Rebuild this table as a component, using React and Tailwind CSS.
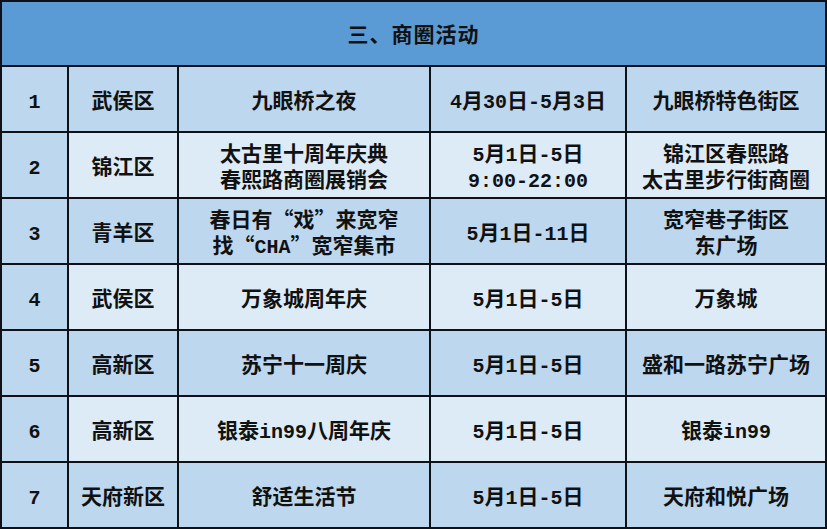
import React from "react";

const rows = [
  ["1", "武侯区", ["九眼桥之夜"], ["4月30日-5月3日"], ["九眼桥特色街区"]],
  ["2", "锦江区", ["太古里十周年庆典", "春熙路商圈展销会"], ["5月1日-5日", "9:00-22:00"], ["锦江区春熙路", "太古里步行街商圈"]],
  ["3", "青羊区", ["春日有“戏”来宽窄", "找“CHA”宽窄集市"], ["5月1日-11日"], ["宽窄巷子街区", "东广场"]],
  ["4", "武侯区", ["万象城周年庆"], ["5月1日-5日"], ["万象城"]],
  ["5", "高新区", ["苏宁十一周庆"], ["5月1日-5日"], ["盛和一路苏宁广场"]],
  ["6", "高新区", ["银泰in99八周年庆"], ["5月1日-5日"], ["银泰in99"]],
  ["7", "天府新区", ["舒适生活节"], ["5月1日-5日"], ["天府和悦广场"]],
];

// latin runs get the half-width monospace look of the original
const Text = ({ s }) =>
  s.split(/([\x20-\x7e]+)/).map((part, i) =>
    /^[\x20-\x7e]+$/.test(part) ? (
      <span key={i} className="text-[20px] font-bold" style={{ fontFamily: '"Liberation Mono", monospace' }}>
        {part}
      </span>
    ) : (
      part
    )
  );

const Cell = ({ lines, bg }) => (
  <div className={`${bg} flex flex-col items-center justify-center`}>
    {lines.map((l, i) => (
      <div key={i} className="whitespace-nowrap h-[26px] leading-[26px]">
        <Text s={l} />
      </div>
    ))}
  </div>
);

export default function App() {
  return (
    <div
      className="w-[827px] h-[529px] bg-[#101018] p-[2px] grid grid-cols-[65px_108px_250px_194px_198px] grid-rows-[63px_repeat(7,64px)] gap-[2px] text-[21px] font-semibold text-[#111]"
      style={{ fontFamily: '"Noto Sans CJK SC", "Liberation Serif", serif' }}
    >
      {/* header */}
      <div className="col-span-5 bg-[#5b9bd5] flex items-center justify-center tracking-[1px]">
        三、商圈活动
      </div>

      {rows.map(([no, area, name, date, place], i) => {
        const bg = i % 2 === 0 ? "bg-[#bdd7ee]" : "bg-[#ddebf7]";
        return (
          <React.Fragment key={no}>
            <Cell lines={[no]} bg="bg-[#bdd7ee]" />
            <Cell lines={[area]} bg={bg} />
            <Cell lines={name} bg={bg} />
            <Cell lines={date} bg={bg} />
            <Cell lines={place} bg={bg} />
          </React.Fragment>
        );
      })}
    </div>
  );
}
